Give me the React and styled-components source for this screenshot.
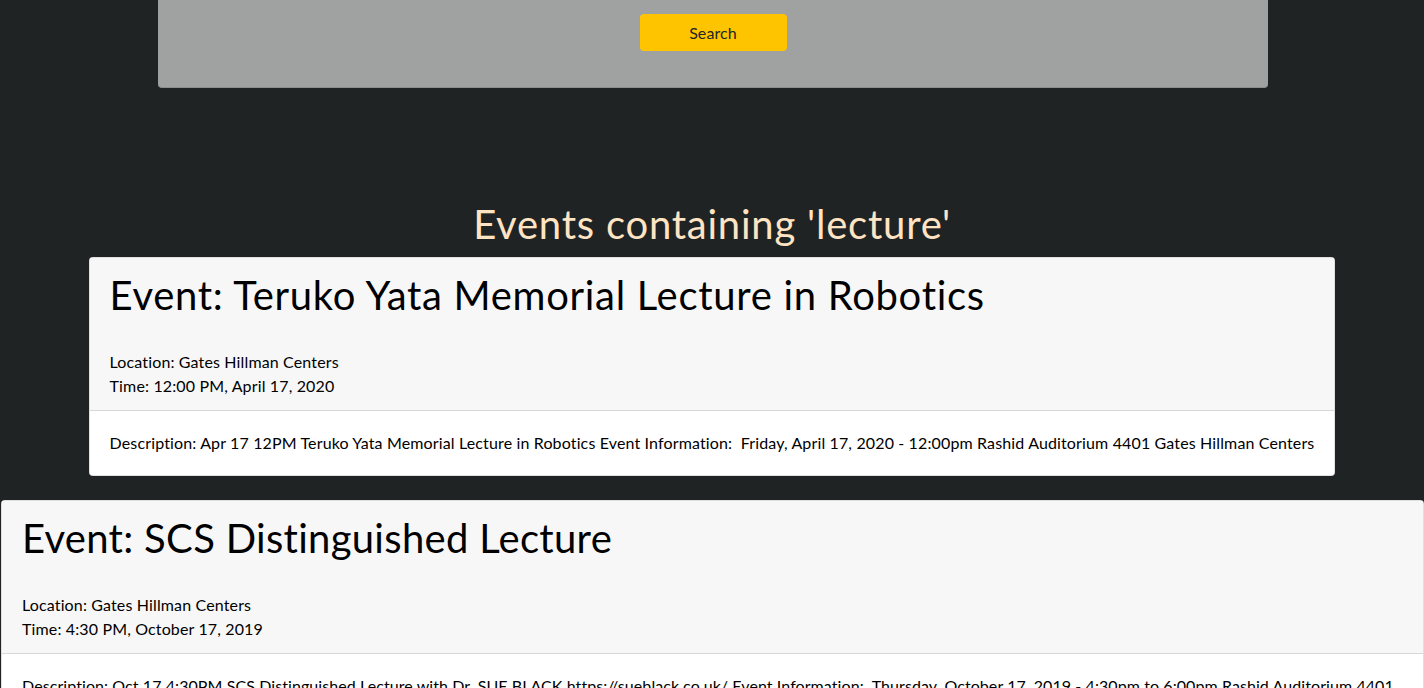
import React from 'react'
import styled, { createGlobalStyle } from 'styled-components'

const GlobalStyle = createGlobalStyle`
  body {
    margin: 0;
    background-color: #202324;
    font-family: Lato, "Noto Sans", sans-serif;
    font-size: 16px;
    letter-spacing: 0.14px;
    color: #000;
    overflow: hidden;
  }
`
const Page = styled.div`
  display: flex;
  flex-direction: column;
  align-items: center;
  min-height: 688px;
`
const SearchPanel = styled.div`
  width: 1110px;
  height: 88px;
  margin-left: 2px;
  background-color: #a0a2a1;
  border-bottom: 1px solid #8c8e8d;
  border-radius: 0 0 4px 4px;
  display: flex;
  justify-content: center;
  padding-top: 14px;
  box-sizing: border-box;
`
const SearchButton = styled.button`
  width: 147px;
  height: 37px;
  background-color: #ffc400;
  border: none;
  border-radius: 4px;
  color: #212529;
  font-family: inherit;
  font-size: 16px;
  letter-spacing: 0.1px;
`
const Heading = styled.h2`
  margin: 112px 0 9px;
  color: bisque;
  font-weight: 400;
  font-size: 40px;
  line-height: 48px;
  letter-spacing: 0.78px;
`
const Card = styled.div`
  width: ${p => (p.$wide ? 'calc(100% - 1px)' : 'fit-content')};
  align-self: ${p => (p.$wide ? 'flex-end' : 'center')};
  background-color: #fff;
  border: 1px solid rgba(0, 0, 0, 0.125);
  border-radius: 4px;
  margin-bottom: 24px;
  box-sizing: border-box;
`
const CardHeader = styled.div`
  background-color: #f7f7f7;
  border-bottom: 1px solid rgba(0, 0, 0, 0.125);
  padding: 13px 20px 12px;
`
const Title = styled.h1`
  margin: 0 0 31px;
  font-size: 40px;
  font-weight: 400;
  line-height: 48px;
  letter-spacing: ${p => (p.$wide ? '0.3px' : '0.7px')};
`
const Line = styled.div`
  line-height: 24px;
`
const CardBody = styled.div`
  padding: 20px;
  line-height: 24px;
  letter-spacing: ${p => (p.$wide ? '0.08px' : '0.14px')};
`

const events = [
  {
    title: 'Teruko Yata Memorial Lecture in Robotics',
    location: 'Gates Hillman Centers',
    time: '12:00 PM, April 17, 2020',
    desc: 'Apr 17 12PM Teruko Yata Memorial Lecture in Robotics Event Information:\u00a0 Friday, April 17, 2020 - 12:00pm Rashid Auditorium 4401 Gates Hillman Centers',
  },
  {
    title: 'SCS Distinguished Lecture',
    location: 'Gates Hillman Centers',
    time: '4:30 PM, October 17, 2019',
    desc: 'Oct 17 4:30PM SCS Distinguished Lecture with Dr. SUE BLACK https://sueblack.co.uk/ Event Information:\u00a0 Thursday, October 17, 2019 - 4:30pm to 6:00pm Rashid Auditorium 4401 Gates Hillman Centers',
    wide: true,
  },
]

const App = () => {
  return (
    <Page>
      <GlobalStyle />
      <SearchPanel>
        <SearchButton>Search</SearchButton>
      </SearchPanel>
      <Heading>Events containing 'lecture'</Heading>
      {events.map(ev => (
        <Card key={ev.title} $wide={ev.wide}>
          <CardHeader>
            <Title $wide={ev.wide}>Event: {ev.title}</Title>
            <Line>Location: {ev.location}</Line>
            <Line>Time: {ev.time}</Line>
          </CardHeader>
          <CardBody $wide={ev.wide}>Description: {ev.desc}</CardBody>
        </Card>
      ))}
    </Page>
  )
}

export default App
